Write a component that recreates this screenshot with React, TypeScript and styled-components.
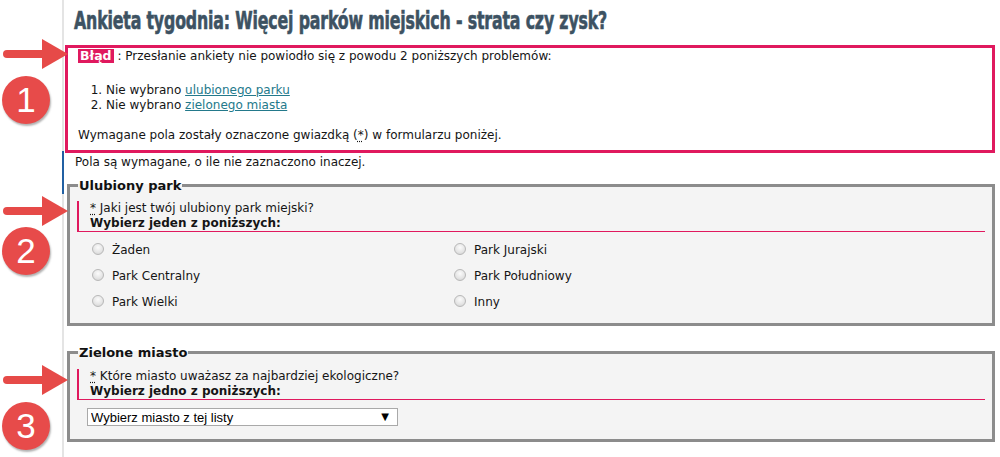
import React from "react";
import styled, { createGlobalStyle } from "styled-components";

const GlobalStyle = createGlobalStyle`
  html, body { margin: 0; padding: 0; background: #ffffff; }
  body {
    font-family: "DejaVu Sans", Verdana, sans-serif;
    font-size: 12px;
    color: #151515;
  }
  #root { min-height: 457px; }
`;

const PINK = "#e0195e";

const Page = styled.div`
  position: relative;
  display: flex;
  min-height: 457px;
  overflow: hidden;
`;

const Gutter = styled.div`
  flex: none;
  width: 62px;
`;

const Main = styled.main`
  flex: 1;
  min-width: 0;
  border-left: 2px solid #e4e4e4;
  padding: 0 5px 0 1px;
`;

const Title = styled.h1`
  margin: 0;
  height: 45px;
  box-sizing: border-box;
  padding: 7px 0 0 9px;
  font-family: "DejaVu Sans Condensed", "DejaVu Sans", sans-serif;
  font-weight: bold;
  font-size: 24px;
  line-height: 28px;
  color: #3d5262;
  white-space: nowrap;
`;

const TitleText = styled.span`
  display: inline-block;
  transform: scaleX(0.73);
  transform-origin: left center;
  letter-spacing: -0.2px;
  -webkit-text-stroke: 0.6px #3d5262;
`;

const ErrorBox = styled.section`
  border: 3px solid ${PINK};
  padding: 1px 10px 7px 10px;
  line-height: 15px;
`;

const ErrorLine = styled.p`
  margin: 0;
`;

const Badge = styled.strong`
  display: inline-block;
  background: ${PINK};
  color: #ffffff;
  padding: 0 2px;
  line-height: 14px;
  font-size: 12.5px;
`;

const ErrorList = styled.ol`
  margin: 19px 0 0 0;
  padding-left: 28px;
`;

const ErrorLink = styled.a`
  color: #23798b;
  text-decoration: underline;
`;

const Hint = styled.p`
  margin: 15px 0 0 0;
`;

const Req = styled.abbr`
  text-decoration: underline dotted;
  text-underline-offset: 2px;
  cursor: help;
`;

const Note = styled.p`
  position: relative;
  margin: 2px 0 0 0;
  padding-left: 10px;
  line-height: 15px;

  &::before {
    content: "";
    position: absolute;
    left: -3px;
    top: -4px;
    width: 2px;
    height: 43px;
    background: #2160a3;
  }
`;

const Fieldset = styled.fieldset<{ $top: number; $bottom: number }>`
  margin: ${(p) => p.$top}px 0 0 2px;
  border: 3px solid #8c8c8c;
  background: #f4f4f4;
  padding: 0 0 ${(p) => p.$bottom}px 0;
  min-width: 0;
`;

const Legend = styled.legend`
  margin-left: 8px;
  padding: 0 1px;
  font-size: 13px;
  font-weight: bold;
  line-height: 15px;
  color: #111;
`;

const Question = styled.div<{ $top: number }>`
  margin: ${(p) => p.$top}px 7px 0 7px;
  border-left: 2px solid ${PINK};
  border-bottom: 1px solid ${PINK};
  padding-left: 11px;
  line-height: 15px;
`;

const Prompt = styled.div`
  font-weight: bold;
`;

const RadioGrid = styled.div`
  display: grid;
  grid-template-columns: 362px 362px;
  grid-template-rows: repeat(3, 26px);
  grid-auto-flow: column;
  margin: 5px 0 0 22px;
`;

const RadioOption = styled.label`
  display: flex;
  align-items: center;
  gap: 8px;
  line-height: 15px;
`;

const RadioDot = styled.span`
  flex: none;
  width: 12px;
  height: 12px;
  box-sizing: border-box;
  border-radius: 50%;
  border: 1px solid #b8b8b8;
  background: radial-gradient(circle at 50% 35%, #fbfbfb 0%, #e6e6e6 55%, #cfcfcf 100%);
  margin-top: -2px;
`;

const SelectWrap = styled.div`
  position: relative;
  width: 311px;
  margin: 8px 0 0 17px;
`;

const Select = styled.select`
  appearance: none;
  -webkit-appearance: none;
  display: block;
  width: 100%;
  height: 18px;
  box-sizing: border-box;
  border: 1px solid #a9a9a9;
  border-radius: 0;
  background: #ffffff;
  padding: 0 0 0 3px;
  font-family: "Liberation Sans", Arial, sans-serif;
  font-size: 13px;
  color: #000;
  outline: none;
`;

const SelectArrow = styled.span`
  position: absolute;
  right: 9px;
  top: 3px;
  font-size: 10px;
  line-height: 12px;
  color: #000;
  pointer-events: none;
`;

const Marker = styled.div<{ $y: number }>`
  position: absolute;
  left: 0;
  top: ${(p) => p.$y - 16}px;
  width: 70px;
  height: 32px;
`;

const NumberBadge = styled.div<{ $y: number }>`
  position: absolute;
  left: 2px;
  top: ${(p) => p.$y - 24}px;
  width: 48px;
  height: 48px;
  border-radius: 50%;
  background: #e74b4a;
  box-shadow: 1px 2px 2px rgba(0, 0, 0, 0.3);
  color: #ffffff;
  font-family: "Liberation Sans", Arial, sans-serif;
  font-size: 35px;
  line-height: 48px;
  text-align: center;
`;

const Arrow: React.FC<{ y: number }> = ({ y }) => (
  <Marker $y={y}>
    <svg width="70" height="32" viewBox="0 0 70 32">
      <rect x="3" y="12" width="44" height="8" rx="4" fill="#e64a48" />
      <polygon points="42,1 68,16 42,31" fill="#e64a48" />
    </svg>
  </Marker>
);

const parks = ["Żaden", "Park Centralny", "Park Wielki", "Park Jurajski", "Park Południowy", "Inny"];

export default function App() {
  return (
    <>
      <GlobalStyle />
      <Page>
        <Gutter />
        <Main>
          <Title>
            <TitleText>Ankieta tygodnia: Więcej parków miejskich - strata czy zysk?</TitleText>
          </Title>
          <ErrorBox>
            <ErrorLine>
              <Badge>Błąd</Badge> : Przesłanie ankiety nie powiodło się z powodu 2 poniższych problemów:
            </ErrorLine>
            <ErrorList>
              <li>
                Nie wybrano <ErrorLink href="#park">ulubionego parku</ErrorLink>
              </li>
              <li>
                Nie wybrano <ErrorLink href="#miasto">zielonego miasta</ErrorLink>
              </li>
            </ErrorList>
            <Hint>
              Wymagane pola zostały oznaczone gwiazdką (<Req title="wymagane">*</Req>) w formularzu poniżej.
            </Hint>
          </ErrorBox>
          <Note>Pola są wymagane, o ile nie zaznaczono inaczej.</Note>
          <Fieldset id="park" $top={8} $bottom={8}>
            <Legend>Ulubiony park</Legend>
            <Question $top={8}>
              <div>
                <Req title="wymagane">*</Req> Jaki jest twój ulubiony park miejski?
              </div>
              <Prompt>Wybierz jeden z poniższych:</Prompt>
            </Question>
            <RadioGrid>
              {parks.map((p) => (
                <RadioOption key={p}>
                  <RadioDot />
                  {p}
                </RadioOption>
              ))}
            </RadioGrid>
          </Fieldset>
          <Fieldset id="miasto" $top={19} $bottom={13}>
            <Legend>Zielone miasto</Legend>
            <Question $top={9}>
              <div>
                <Req title="wymagane">*</Req> Które miasto uważasz za najbardziej ekologiczne?
              </div>
              <Prompt>Wybierz jedno z poniższych:</Prompt>
            </Question>
            <SelectWrap>
              <Select defaultValue="">
                <option value="">Wybierz miasto z tej listy</option>
              </Select>
              <SelectArrow>▼</SelectArrow>
            </SelectWrap>
          </Fieldset>
        </Main>
        <Arrow y={54} />
        <NumberBadge $y={100}>1</NumberBadge>
        <Arrow y={211} />
        <NumberBadge $y={251}>2</NumberBadge>
        <Arrow y={380} />
        <NumberBadge $y={426}>3</NumberBadge>
      </Page>
    </>
  );
}
